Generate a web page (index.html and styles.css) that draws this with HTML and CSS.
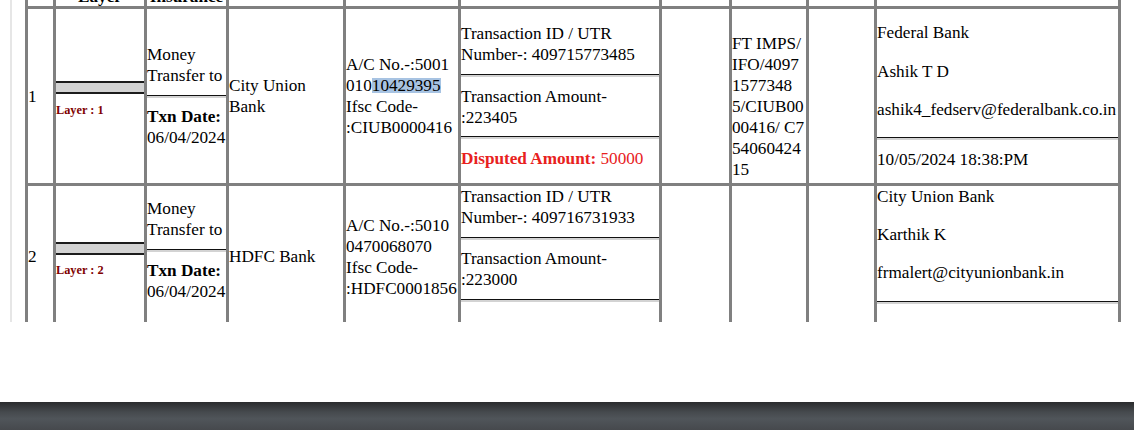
FILE: index.html
```html
<!DOCTYPE html>
<html lang="en">
<head>
<meta charset="utf-8">
<title>Money Trail</title>
<link rel="stylesheet" href="styles.css">
</head>
<body>
<div class="panel">
  <table class="trail">
    <colgroup>
      <col class="w-sn"><col class="w-layer"><col class="w-action"><col class="w-bank"><col class="w-acct"><col class="w-txn"><col class="w-amt"><col class="w-ref"><col class="w-rem"><col class="w-contact">
    </colgroup>
    <thead>
      <tr class="head">
        <th></th><th>Layer</th><th>Insurance</th><th></th><th></th><th></th><th></th><th></th><th></th><th></th>
      </tr>
    </thead>
    <tbody>
      <tr class="row-1">
        <td class="sn">1</td>
        <td class="layer"><div class="layer-top"></div><div class="layer-band"></div><div class="layer-name">Layer : 1</div></td>
        <td>Money Transfer to<hr class="rule"><b>Txn Date:</b> 06/04/2024</td>
        <td>City Union Bank</td>
        <td>A/C No.-:5001<br>010<span class="sel">10429395</span><br>Ifsc Code-<br>:CIUB0000416</td>
        <td>Transaction ID / UTR Number-: 409715773485<hr class="rule">Transaction Amount- :223405<hr class="rule"><span class="disputed"><b>Disputed Amount:</b> 50000</span></td>
        <td></td>
        <td class="ref">FT IMPS/<br>IFO/4097<br>1577348<br>5/CIUB00<br>00416/ C7<br>54060424<br>15</td>
        <td></td>
        <td>Federal Bank<p>Ashik T D</p><p>ashik4_fedserv@federalbank.co.in</p><hr class="rule">10/05/2024 18:38:PM</td>
      </tr>
      <tr class="row-2">
        <td class="sn">2</td>
        <td class="layer"><div class="layer-top"></div><div class="layer-band"></div><div class="layer-name">Layer : 2</div></td>
        <td class="trail-pad">Money Transfer to<hr class="rule"><b>Txn Date:</b> 06/04/2024</td>
        <td>HDFC Bank</td>
        <td>A/C No.-:5010<br>0470068070<br>Ifsc Code-<br>:HDFC0001856</td>
        <td class="lead">Transaction ID / UTR Number-: 409716731933<hr class="rule">Transaction Amount- :223000<hr class="rule"></td>
        <td></td>
        <td></td>
        <td></td>
        <td class="lead">City Union Bank<p>Karthik K</p><p>frmalert@cityunionbank.in</p><hr class="rule"></td>
      </tr>
    </tbody>
  </table>
</div>
<div class="taskbar"></div>
</body>
</html>
```

FILE: styles.css
```css
html, body {
  margin: 0;
  padding: 0;
}

body {
  width: 1134px;
  height: 430px;
  overflow: hidden;
  background: #fff;
  color: #000;
  font-family: "Liberation Serif", "Times New Roman", serif;
  font-size: 17.2px;
  line-height: 21px;
  display: flex;
  flex-direction: column;
}

.panel {
  height: 322px;
  flex: none;
  overflow: hidden;
  margin-left: 10px;
  border-left: 2px solid #e6e6e6;
  padding-left: 13px;
}

.trail {
  table-layout: fixed;
  width: 1096px;
  border-collapse: separate;
  border-spacing: 3px;
  background: #808080;
  margin-top: -37px;
}

.w-sn { width: 25px; }
.w-layer { width: 88px; }
.w-action { width: 79px; }
.w-bank { width: 114px; }
.w-acct { width: 112px; }
.w-txn { width: 198px; }
.w-amt { width: 67px; }
.w-ref { width: 74px; }
.w-rem { width: 65px; }
.w-contact { width: 241px; }

.trail th,
.trail td {
  background: #fff;
  padding: 0;
  text-align: left;
  vertical-align: middle;
  overflow-wrap: break-word;
}

.head { height: 40px; }

.trail th {
  vertical-align: bottom;
  text-align: center;
  font-weight: bold;
  line-height: 19px;
}

.row-1 { height: 174px; }
.row-2 { height: 141px; }

.trail td.lead {
  vertical-align: top;
}

.trail td.trail-pad {
  padding-bottom: 13px;
}

.trail td p {
  margin: 17.2px 0;
}

.rule {
  height: 0;
  margin: 8.6px 0;
  border: 0;
  border-top: 1px solid #111;
  border-bottom: 2px solid #d3d3d3;
}

.layer-top {
  height: 18.5px;
  border-bottom: 2px solid #1c1c1c;
}

.layer-band {
  height: 9px;
  background: #d3d3d3;
  border-bottom: 2px solid #1c1c1c;
}

.layer-name {
  padding: 8.5px 0 12px;
  font-size: 12.3px;
  line-height: 15px;
  font-weight: bold;
  color: #800000;
}

.trail td.ref {
  padding-top: 20px;
}

.disputed {
  color: #e8211d;
}

.sel {
  background: linear-gradient(transparent 2px, #a7c3e2 2px, #a7c3e2 17px, transparent 17px);
}

.taskbar {
  margin-top: auto;
  height: 28px;
  background: linear-gradient(#2a2b2d 0%, #45494d 35%, #50555a 60%, #46494d 100%);
}
```
